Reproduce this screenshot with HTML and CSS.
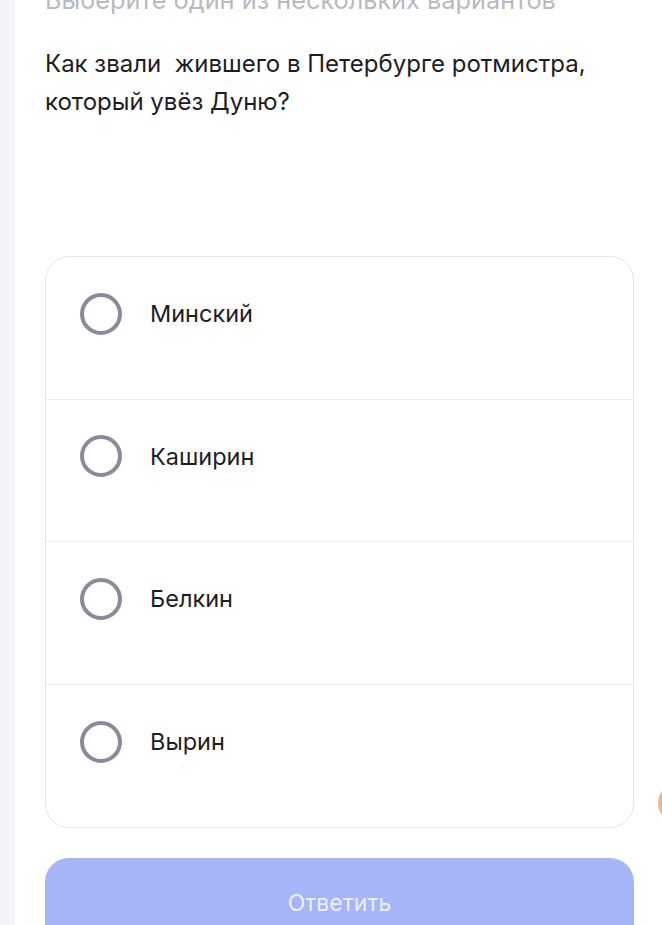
FILE: index.html
```html
<!DOCTYPE html>
<html lang="ru">
<head>
  <meta charset="UTF-8">
  <meta name="viewport" content="width=device-width, initial-scale=1.0">
  <title>Вопрос</title>
  <link rel="stylesheet" href="styles.css">
</head>
<body>
  <div class="layout">
    <div class="sidebar"></div>
    <div class="quiz">
      <p class="hint">Выберите один из нескольких вариантов</p>
      <h2 class="question">Как звали&nbsp; жившего в Петербурге ротмистра, который увёз Дуню?</h2>

      <div class="options">
        <label class="option">
          <span class="radio"></span>
          <span class="option-text">Минский</span>
        </label>
        <label class="option">
          <span class="radio"></span>
          <span class="option-text">Каширин</span>
        </label>
        <label class="option">
          <span class="radio"></span>
          <span class="option-text">Белкин</span>
        </label>
        <label class="option">
          <span class="radio"></span>
          <span class="option-text">Вырин</span>
        </label>
      </div>

      <button class="answer-btn" disabled>Ответить</button>
    </div>
    <div class="blob"></div>
  </div>
</body>
</html>
```

FILE: styles.css
```css
body {
  margin: 0;
  font-family: Inter, "Noto Sans", sans-serif;
  background: #fff;
  color: #1d1d24;
  overflow: hidden;
}
.layout {
  display: flex;
  position: relative;
  height: 925px;
}
.sidebar {
  width: 15px;
  flex-shrink: 0;
  background: #f4f4f8;
}
.quiz {
  flex: 1;
  padding: 0 28px 0 30px;
}
.hint {
  margin: -16px 0 0;
  font-size: 25.3px;
  line-height: 32px;
  color: #b9b9c0;
}
.question {
  margin: 29px 0 0;
  font-size: 24px;
  font-weight: 400;
  line-height: 38px;
  color: #1d1d24;
  max-width: 570px;
}
.options {
  margin-top: 135px;
  border: 1px solid #e6e6eb;
  border-radius: 24px;
  overflow: hidden;
}
.option {
  display: flex;
  align-items: center;
  height: 142.5px;
  box-sizing: border-box;
  padding: 0 34px 28px;
  border-bottom: 1px solid #e9e9ee;
  cursor: pointer;
}
.option:last-child { border-bottom: none; }
.radio {
  width: 42px;
  height: 42px;
  box-sizing: border-box;
  border: 4px solid #8a8a98;
  border-radius: 50%;
  flex-shrink: 0;
}
.option-text {
  margin-left: 28px;
  font-size: 23.5px;
  font-weight: 400;
  color: #1d1d24;
}
.answer-btn {
  display: block;
  width: 100%;
  height: 90px;
  margin-top: 30px;
  padding-bottom: 2px;
  border: none;
  border-radius: 24px;
  background: #a6b5f8;
  color: rgba(255,255,255,0.82);
  font-family: inherit;
  font-size: 23px;
  font-weight: 400;
}
.blob {
  position: absolute;
  left: 658px;
  top: 783px;
  width: 40px;
  height: 40px;
  border-radius: 50%;
  background: #f2b585;
}
```
